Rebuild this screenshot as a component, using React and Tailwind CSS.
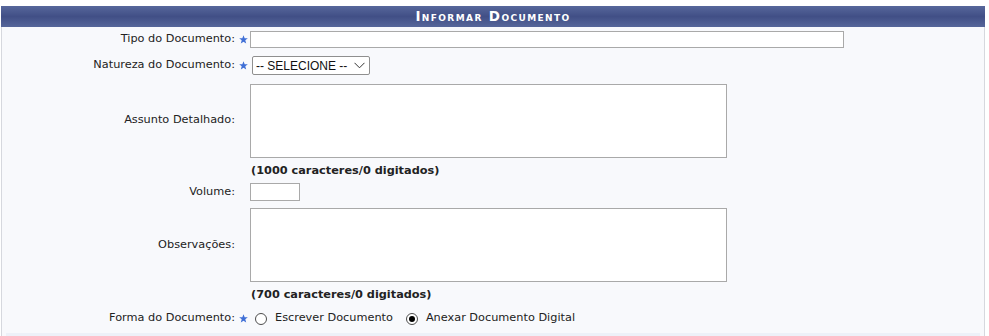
import React from 'react';

const Star = () => (
    <svg width="9" height="9" viewBox="0 0 10 10" className="block">
        <path d="M5 0.3 L6.3 3.6 L9.8 3.7 L7 5.9 L8 9.5 L5 7.4 L2 9.5 L3 5.9 L0.2 3.7 L3.7 3.6 Z" fill="#3f6fd6" />
    </svg>
);

const Row = ({ label, required, h, children }) => (
    <div className={`flex items-center ${h}`}>
        <div className="w-[234px] shrink-0 text-right pr-[1px]">{label}</div>
        <div className="w-[14px] shrink-0 flex justify-center">{required && <Star />}</div>
        <div className="flex items-center">{children}</div>
    </div>
);

const Radio = ({ checked, label }) => (
    <label className="flex items-center gap-[8px]">
        <span className="w-[12px] h-[12px] rounded-full border border-[#4d4d4d] bg-white flex items-center justify-center">
            {checked && <span className="w-[6px] h-[6px] rounded-full bg-black" />}
        </span>
        <span>{label}</span>
    </label>
);

const App = () => {
    return (
        <div className="w-[989px] h-[336px] bg-white pt-[6px] overflow-hidden font-['DejaVu_Sans',Verdana,sans-serif] text-[11.3px] text-[#222]">
            <div className="ml-[1px] w-[984px]">
                {/* Caption */}
                <div className="h-[21px] flex items-center justify-center bg-gradient-to-b from-[#57679b] via-[#414f86] to-[#56669a] text-white font-bold tracking-[1.4px] [font-variant:small-caps] text-[13.5px]">
                    Informar Documento
                </div>

                <div className="bg-[#f8f9fc] border-l border-r border-[#d6d8de]">
                    <Row label="Tipo do Documento:" required h="h-[25px]">
                        <input type="text" className="w-[594px] h-[17px] bg-white border border-[#a9a9a9] outline-none" />
                    </Row>
                    <Row label="Natureza do Documento:" required h="h-[27px]">
                        <div className="flex items-center ml-[2px]">
                            <select className="appearance-none w-[118px] h-[19px] bg-white border border-[#8f8f8f] rounded-[2px] pl-[3px] pr-[18px] font-['Liberation_Sans',Arial,sans-serif] text-[12px] text-[#111] outline-none">
                                <option>-- SELECIONE --</option>
                            </select>
                            <svg width="11" height="7" viewBox="0 0 11 7" className="-ml-[16px] pointer-events-none">
                                <path d="M0.5 0.8 L5.5 5.8 L10.5 0.8" fill="none" stroke="#333" strokeWidth="1" />
                            </svg>
                        </div>
                    </Row>
                    <Row label="Assunto Detalhado:" h="h-[83px]">
                        <textarea className="w-[477px] h-[74px] bg-white border border-[#a9a9a9] resize-none outline-none" />
                    </Row>
                    <Row label="" h="h-[16px]">
                        <span className="font-bold pl-[1px] pt-[3px]">(1000 caracteres/0 digitados)</span>
                    </Row>
                    <Row label="Volume:" h="h-[28px]">
                        <input type="text" className="w-[50px] h-[18px] bg-white border border-[#a9a9a9] outline-none" />
                    </Row>
                    <Row label="Observações:" h="h-[78px]">
                        <textarea className="w-[477px] h-[74px] bg-white border border-[#a9a9a9] resize-none outline-none" />
                    </Row>
                    <Row label="" h="h-[19px]">
                        <span className="font-bold pl-[1px] pt-[3px]">(700 caracteres/0 digitados)</span>
                    </Row>
                    <Row label="Forma do Documento:" required h="h-[30px]">
                        <div className="flex items-center gap-[13px] pl-[5px] pt-[1px]">
                            <Radio label="Escrever Documento" />
                            <Radio checked label="Anexar Documento Digital" />
                        </div>
                    </Row>
                    <div className="mx-[4px] h-[6px] bg-[#edf1f8]" />
                </div>
            </div>
        </div>
    );
};

export default App;
